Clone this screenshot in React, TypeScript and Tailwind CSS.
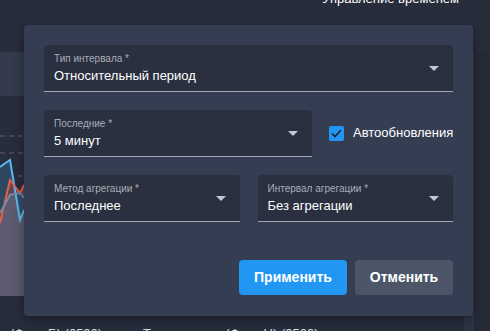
import React from 'react';

const font = { fontFamily: '"Liberation Sans", Arial, sans-serif' };

const Arrow = () => (
  <svg width="10" height="5" viewBox="0 0 10 5" className="shrink-0">
    <path d="M0 0 L10 0 L5 5 Z" fill="#c4c8d0" />
  </svg>
);

interface SelectFieldProps {
  label: string;
  value: string;
  className?: string;
}

const SelectField: React.FC<SelectFieldProps> = ({ label, value, className }) => (
  <div className={`h-[47px] bg-[#2a3040] rounded-t-[4px] border-b border-[#a3a7b0] flex items-center pl-[10px] pr-[14px] ${className ?? ''}`}>
    <div className="flex-1 flex flex-col pt-[2px]">
      <span className="text-[10px] leading-[13px] text-[#a9adb6]">{label}</span>
      <span className="text-[13px] leading-[20px] text-white mt-px">{value}</span>
    </div>
    <Arrow />
  </div>
);

export default function App() {
  return (
    <div className="relative w-[490px] h-[331px] overflow-hidden bg-[#282d3c]" style={font}>
      {/* background page */}
      <div className="flex flex-col h-full">
        <div className="h-[52px] flex justify-end pr-[31px]">
          <span className="text-[13px] leading-[15px] -mt-[9px] text-white">Управление временем</span>
        </div>
        <div className="flex flex-1">
          <div className="flex-1 flex flex-col">
            <div className="h-[44px] bg-[#333b4c]" />
            <div className="flex-1 relative">
              <svg width="440" height="240" viewBox="0 0 440 240" className="absolute left-0 top-0">
                {[40, 57, 80, 103, 127, 149, 171, 194].map((y) => (
                  <line key={y} x1="0" y1={y} x2="440" y2={y} stroke="#5d6373" strokeWidth="1" strokeDasharray="5 4" />
                ))}
                <path d="M0 117 L10 99 L20 97 L24 102 L24 200 L0 200 Z" fill="#5c5b6f" />
                <path d="M0 71 L10 64 L20 124 L24 114 L24 102 L20 97 L10 99 L0 117 Z" fill="#2f4a63" opacity="0.9" />
                <path d="M0 127 L10 84 L20 97 L24 89 L24 102 L20 97 L10 99 L0 117 Z" fill="#6b4550" opacity="0.9" />
                <path d="M0 71 L10 64 L20 124 L24 114" fill="none" stroke="#5bb8f0" strokeWidth="2" />
                <path d="M0 127 L10 84 L20 97 L24 89" fill="none" stroke="#e0604f" strokeWidth="2" />
                <path d="M0 117 L10 99 L20 97 L24 102" fill="none" stroke="#7488a8" strokeWidth="2" />
              </svg>
              <div className="absolute left-[10px] top-[230px] flex items-center text-[13px] leading-[16px] text-[#d7dae0] whitespace-nowrap">
                <span className="w-[120px]">(Фаза Б) (0500)</span>
                <span className="w-[8px] h-[8px] rounded-full bg-[#7488a8] mt-[6px]" />
                <span className="ml-[5px]">Температура (Фаза Ц) (0500)</span>
              </div>
            </div>
          </div>
          <div className="w-[10px] bg-[#2f3545]" />
          <div className="w-[16px] bg-[#252a37]" />
        </div>
      </div>

      {/* popover */}
      <div className="absolute left-[24px] top-[25px] w-[449px] h-[291px] bg-[#343d51] rounded-[4px] shadow-[0_4px_12px_rgba(0,0,0,0.35)] p-[20px] flex flex-col">
        <SelectField label="Тип интервала *" value="Относительный период" />
        <div className="flex items-center mt-[18px]">
          <SelectField label="Последние *" value="5 минут" className="w-[268px] shrink-0" />
          <label className="flex items-center ml-[17px] -mt-px">
            <span className="w-[15px] h-[15px] rounded-[2px] bg-[#2196f3] flex items-center justify-center">
              <svg width="11" height="9" viewBox="0 0 11 9">
                <path d="M1 4.5 L4 7.5 L10 1" fill="none" stroke="#1c2230" strokeWidth="1.6" />
              </svg>
            </span>
            <span className="ml-[9px] text-[13px] text-white">Автообновления</span>
          </label>
        </div>
        <div className="flex gap-[18px] mt-[18px]">
          <SelectField label="Метод агрегации *" value="Последнее" className="flex-1" />
          <SelectField label="Интервал агрегации *" value="Без агрегации" className="flex-1" />
        </div>
        <div className="flex justify-end gap-[8px] mt-auto mb-px">
          <button className="w-[108px] h-[35px] rounded-[4px] bg-[#2196f3] text-white text-[14px] font-bold">Применить</button>
          <button className="w-[98px] h-[35px] rounded-[4px] bg-[#4d5669] text-white text-[14px] font-bold">Отменить</button>
        </div>
      </div>
    </div>
  );
}
